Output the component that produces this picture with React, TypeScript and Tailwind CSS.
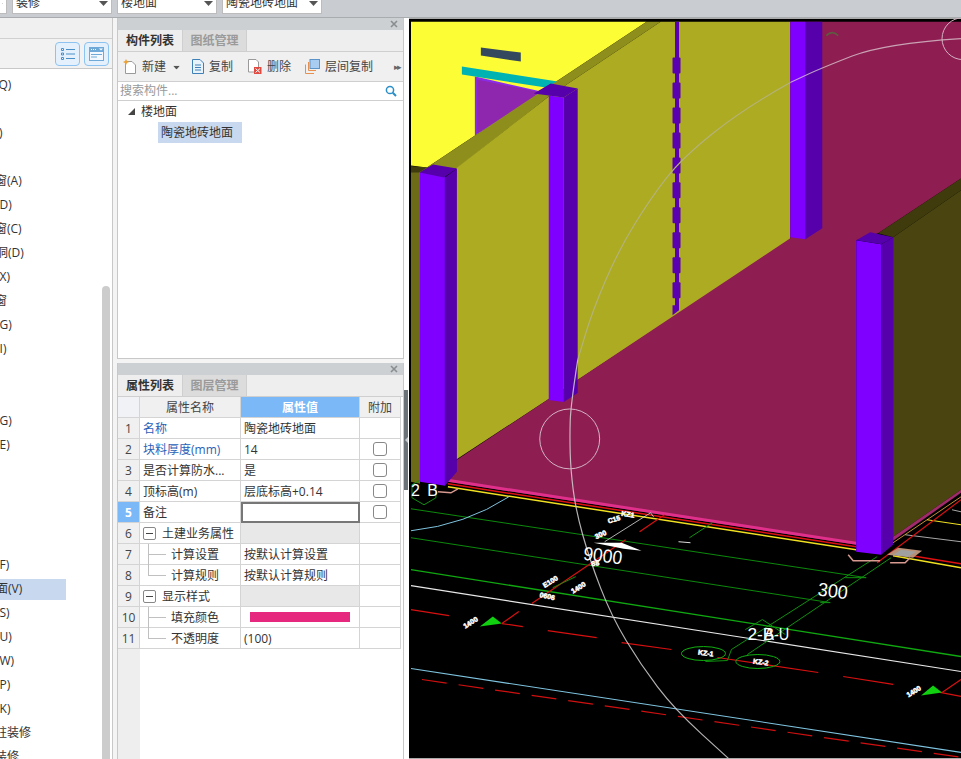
import React from "react";

const listRows: { text: string; cls?: string; active?: boolean }[] = [
  { text: "(Q)", cls: "ml-[-5px]" },
  { text: "" },
  { text: ")", cls: "ml-[-1px]" },
  { text: "" },
  { text: "窗(A)", cls: "ml-[-5px]" },
  { text: "(D)", cls: "ml-[-4px]" },
  { text: "窗(C)", cls: "ml-[-5px]" },
  { text: "洞(D)", cls: "ml-[-4px]" },
  { text: "(X)", cls: "ml-[-4px]" },
  { text: "窗", cls: "ml-[-5px]" },
  { text: "(G)", cls: "ml-[-4px]" },
  { text: "(I)", cls: "ml-[-4px]" },
  { text: "" },
  { text: "" },
  { text: "(G)", cls: "ml-[-4px]" },
  { text: "(E)", cls: "ml-[-4px]" },
  { text: "" },
  { text: "" },
  { text: "" },
  { text: "" },
  { text: "(F)", cls: "ml-[-4px]" },
  { text: "面(V)", cls: "ml-[-4px]", active: true },
  { text: "(S)", cls: "ml-[-4px]" },
  { text: "(U)", cls: "ml-[-4px]" },
  { text: "(W)", cls: "ml-[-4px]" },
  { text: "(P)", cls: "ml-[-4px]" },
  { text: "(K)", cls: "ml-[-4px]" },
  { text: "柱装修", cls: "ml-[-5px]" },
  { text: "装修", cls: "ml-[-5px]" },
];

const props = [
  { name: "名称", value: "陶瓷地砖地面", blue: true },
  { name: "块料厚度(mm)", value: "14", blue: true, check: true },
  { name: "是否计算防水...", value: "是", check: true },
  { name: "顶标高(m)", value: "层底标高+0.14", check: true },
  { name: "备注", value: "", check: true, selected: true },
  { name: "土建业务属性", group: true },
  { name: "计算设置", value: "按默认计算设置", child: "mid" },
  { name: "计算规则", value: "按默认计算规则", child: "last" },
  { name: "显示样式", group: true },
  { name: "填充颜色", swatch: true, child: "mid" },
  { name: "不透明度", value: "(100)", child: "last" },
];

const arcFloorTop: [number, number][] = [[961, 38], [884, 43], [820, 68], [790, 82]];
const arcWall: [number, number][] = [[790, 82], [745, 107], [682, 157], [650, 198], [618, 250], [592, 310], [577, 360]];
const arcFloorLow: [number, number][] = [[577, 360], [570, 405], [569, 437], [570, 470], [575, 510], [589, 560], [611, 617], [640, 665], [674, 710], [728, 759]];

// midpoint smoothing so the big grid arc doesn't look faceted
const smooth = (pts: [number, number][]) => {
  let d = `M${pts[0][0]} ${pts[0][1]}`;
  for (let i = 1; i < pts.length - 1; i++) {
    const mx = (pts[i][0] + pts[i + 1][0]) / 2;
    const my = (pts[i][1] + pts[i + 1][1]) / 2;
    d += ` Q${pts[i][0]} ${pts[i][1]} ${mx} ${my}`;
  }
  const last = pts[pts.length - 1];
  return d + ` L${last[0]} ${last[1]}`;
};

const redDashes = [
  [410, 610, 448, 616], [501, 624, 522, 627], [547, 631, 596, 638], [621, 643, 671, 650],
  [717, 658, 818, 673], [843, 677, 893, 685], [940, 693, 961, 697],
  [501, 624, 518, 612], [531, 604, 625, 540], [639, 532, 664, 515], [877, 563, 961, 500],
  [942, 693, 961, 680],
];

const cadLabels = [
  { x: 627, y: 517, r: 8, t: "KZ1" },
  { x: 614, y: 522, r: -15, t: "C15" },
  { x: 601, y: 537, r: -25, t: "300" },
  { x: 595, y: 566, r: -10, t: "88" },
  { x: 551, y: 584, r: -32, t: "E100" },
  { x: 579, y: 590, r: -32, t: "1400" },
  { x: 546, y: 599, r: 12, t: "0606" },
  { x: 471, y: 625, r: -32, t: "1400" },
  { x: 705, y: 656, r: 8, t: "KZ-1" },
  { x: 760, y: 665, r: 8, t: "KZ-2" },
  { x: 915, y: 694, r: -32, t: "1400" },
];

const Close = () => (
  <svg width="8" height="8" viewBox="0 0 8 8" className="mr-[5px]">
    <path d="M1 1L7 7M7 1L1 7" stroke="#8a8d90" strokeWidth="1.6" />
  </svg>
);

const Caret = () => (
  <svg width="9" height="5" viewBox="0 0 9 5">
    <path d="M0 0H9L4.5 5Z" fill="#555" />
  </svg>
);

const Select = ({ label, cls }: { label: string; cls: string }) => (
  <div className={`h-[22px] mt-[-8px] bg-white border border-[#bcbcbc] flex items-center justify-between pl-[3px] pr-[3px] text-[12px] text-[#333] ${cls}`}>
    <span>{label}</span>
    <Caret />
  </div>
);

const Tabs = ({ active, other }: { active: string; other: string }) => (
  <div className="h-[22px] flex bg-[#eeeeee] border-b border-[#cfcfcf] text-[12px]">
    <div className="w-[65px] flex items-center justify-center font-semibold text-[#333] border-r border-[#cfcfcf]">{active}</div>
    <div className="w-[64px] flex items-center justify-center font-semibold text-[#9a9a9a] bg-[#dcdcdc] border-r border-[#cfcfcf]">{other}</div>
  </div>
);

const ToolButton = ({ icon, label, cls }: { icon: React.ReactNode; label: string; cls: string }) => (
  <div className={`flex items-center gap-[5px] text-[12px] text-[#444] ${cls}`}>
    {icon}
    <span>{label}</span>
  </div>
);

const Canvas = () => (
  <svg viewBox="408 18 553 741" className="block w-full h-full" fontFamily="'Liberation Sans', sans-serif">
    <rect x="408" y="18" width="553" height="741" fill="#000" />
    {/* ceiling + back wall */}
    <path d="M410 21H646L426 167L410 165Z" fill="#fdfd35" />
    <path d="M474 76L479 77L545 92L474 135Z" fill="#8a2be8" />
    <path d="M476 79L541 92L476 133Z" fill="#8e27ae" />
    <path d="M461 66L557 81L545 87L461 74Z" fill="#00b3b3" />
    <path d="M480 47L520 52V61L480 55Z" fill="#35495e" />
    <path d="M646 21H660L548 96L456 168L440 170L426 167Z" fill="#8e8e1c" />
    <path d="M660 21H790V240L455 460V168L548 96Z" fill="#adab22" />
    <path d="M410 166L426 167L440 170L419 176V484L410 482Z" fill="#6e6b17" />
    <path d="M410 166L426 167L418 172L410 172Z" fill="#3f3d0f" />
    {/* thin column behind the floor line */}
    <path d="M674.5 21H678.5V310L672 315V305H674.5Z" fill="#5a00b0" />
    {[57, 82, 107, 132, 157, 182, 207, 232, 257, 282].map((y) => (
      <rect key={y} x="672" y={y} width="8" height="16" rx="1" fill="#5a00b0" />
    ))}
    {/* floor */}
    <path d="M822 21H961V178L878 233L856 240V545L447 482L456 460L790 238V21Z" fill="#8e1d52" />
    <path d="M447 479L856 542V545L447 482Z" fill="#e0308c" />
    {/* right wall */}
    <path d="M893 237L961 190V490L893 537Z" fill="#4a4510" />
    <path d="M878 233L961 178V190L893 237Z" fill="#3f3b0c" />
    <path d="M893 537L961 490V493L893 541Z" fill="#a02a6a" />
    <path d="M893 543L961 497" stroke="#c89030" strokeWidth="1" />
    {/* plan lines below the model */}
    <path d="M447 484L856 547M893 553L961 564" stroke="#e01010" strokeWidth="1.5" />
    <path d="M447 487L856 550M893 556L961 568" stroke="#f0e020" strokeWidth="1.5" />
    <path d="M927 520L961 525" stroke="#f0e020" strokeWidth="1.2" />
    <path d="M905 535L961 542M952 510L961 512" stroke="#a8a8a8" strokeWidth="1" />
    <path d="M410 509L866 578M410 538L830 603" stroke="#0c8a0c" strokeWidth="1" />
    <path d="M410 570L961 657" stroke="#10a810" strokeWidth="1.3" />
    <path d="M410 586L961 672" stroke="#e8e8e8" strokeWidth="1.2" />
    <path d="M410 669L961 753" stroke="#7fc4e0" strokeWidth="1.1" />
    <path d="M410 531Q465 525 508 497" stroke="#7fc4e0" strokeWidth="1" fill="none" />
    <path d="M421 680L961 758" stroke="#d01010" strokeWidth="1.2" strokeDasharray="25 12" />
    {redDashes.map(([a, b, c, d]) => (
      <line key={`${a}-${b}-${c}`} x1={a} y1={b} x2={c} y2={d} stroke="#d81010" strokeWidth="1.2" />
    ))}
    <path d="M731 650L877 557M747 655L891 558M705 662L727 661L731 650M689 538L712 523M552 588L575 577" stroke="#0f900f" strokeWidth="1" fill="none" />
    <path d="M845 578L866 578M820 603L830 603M745 630L762 620L785 635" stroke="#0f900f" strokeWidth="1" fill="none" />
    <path d="M678 542L690 543" stroke="#ddd" strokeWidth="1" />
    <path d="M604 542L650 513L653 517" stroke="#ddd" strokeWidth="0.8" fill="none" />
    <path d="M593 543H621L641 551L623 549Z" fill="#fff" />
    <path d="M479 627L492 617L501 624Z" fill="#10d010" />
    <path d="M921 696L933 686L942 693Z" fill="#10d010" />
    <ellipse cx="703" cy="654" rx="22" ry="7" fill="none" stroke="#10b010" strokeWidth="1" />
    <ellipse cx="757.5" cy="662" rx="22" ry="7" fill="none" stroke="#10b010" strokeWidth="1" />
    {/* footing outlines */}
    <path d="M848 555L853 561H880M890 563H905L910 558" stroke="#d89a90" strokeWidth="1.5" fill="none" />
    <path d="M887 555L898 548L922 551L913 558Z" fill="#b89078" />
    <path d="M893 555L901 550L916 552L908 557Z" fill="#a0a0a0" />
    <path d="M437 492L450 493L457 489" stroke="#d89a90" strokeWidth="1.5" fill="none" />
    <path d="M423 478L435 485V498L423 505L411 498V485Z" fill="none" stroke="#0f900f" strokeWidth="1" />
    {/* pillars */}
    <path d="M419 172H444V486L419 482Z" fill="#7f00ff" />
    <path d="M444 177L456 168V472L444 486Z" fill="#5500aa" />
    <path d="M418.5 172L432 164L456 168L443 177Z" fill="#5500aa" />
    <path d="M548 95L563 97V402L548 400Z" fill="#7f00ff" />
    <path d="M563 97L577 88V393L563 402Z" fill="#5500aa" />
    <path d="M533 93L550 83L577 88L563 97L548 95Z" fill="#5500aa" />
    <path d="M790 21H805V239L790 237Z" fill="#7f00ff" />
    <path d="M805 21H822V228L805 239Z" fill="#5500aa" />
    <path d="M856 240L881 244V555L856 552Z" fill="#7f00ff" />
    <path d="M881 244L893 237V545L881 555Z" fill="#5500aa" />
    <path d="M856 240L870 232L893 237L881 244Z" fill="#5500aa" />
    {/* grid bubbles + arc: it reads muted over the olive wall */}
    <path d={smooth(arcFloorTop)} fill="none" stroke="#d8c4cc" strokeOpacity="0.8" strokeWidth="1.1" />
    <path d={smooth(arcWall)} fill="none" stroke="#b4b27a" strokeWidth="1.2" />
    <path d={smooth(arcFloorLow)} fill="none" stroke="#d4d0d2" strokeOpacity="0.85" strokeWidth="1.2" />
    <circle cx="569" cy="439" r="30" fill="none" stroke="#d4b4c4" strokeWidth="1" />
    <circle cx="963" cy="38" r="21" fill="none" stroke="#d4b4c4" strokeWidth="1" />
    <path d="M826 35Q832 29 838 35" stroke="#5c5c40" strokeWidth="1.5" fill="none" />
    {cadLabels.map((l) => (
      <text key={`${l.x}-${l.y}`} x={l.x} y={l.y} transform={`rotate(${l.r} ${l.x} ${l.y})`} fontSize="7" fontWeight="700" fill="#fff" stroke="#fff" strokeWidth="0.5" textAnchor="middle">{l.t}</text>
    ))}
    <text x="410" y="496" fontSize="16" fill="#fff" textLength="27">2 B</text>
    <text x="582" y="560" transform="rotate(7 582 560)" fontSize="19" fill="#fff" textLength="39" lengthAdjust="spacingAndGlyphs">9000</text>
    <text x="817" y="596" transform="rotate(7 817 596)" fontSize="19" fill="#fff" textLength="30" lengthAdjust="spacingAndGlyphs">300</text>
    <text x="747" y="640" fontSize="17" fill="#fff" textLength="27" lengthAdjust="spacingAndGlyphs">2-B</text>
    <text x="764" y="640" fontSize="17" fill="#fff" textLength="25" lengthAdjust="spacingAndGlyphs">A-U</text>
  </svg>
);

export default function App() {
  return (
    <div className="w-[961px] h-[759px] overflow-hidden flex flex-col bg-white font-['Open_Sans','Noto_Sans_CJK_SC',sans-serif]">
      {/* ribbon selectors, cut off by the crop */}
      <div className="h-[18px] shrink-0 bg-[#c9cdd1] border-b border-[#a9acaf] flex">
        <Select label="" cls="w-[8px] ml-[-1px] border-l-0" />
        <Select label="装修" cls="w-[100px] ml-[5px]" />
        <Select label="楼地面" cls="w-[100px] ml-[5px]" />
        <Select label="陶瓷地砖地面" cls="w-[100px] ml-[5px]" />
      </div>

      <div className="flex-1 flex min-h-0">
        {/* left navigation tree */}
        <div className="w-[113px] shrink-0 border-r border-[#c8c8c8] flex flex-col">
          <div className="h-[21px] bg-[#f0f0f0] border-b border-[#d0d0d0]" />
          <div className="h-[30px] bg-[#f2f2f2] border-b border-[#c8c8c8] flex items-center justify-end pr-[3px] gap-[4px]">
            <div className="w-[25px] h-[24px] rounded-[4px] border border-[#8cc3f0] bg-[#e4f1fc] flex items-center justify-center">
              <svg width="14" height="14" viewBox="0 0 14 14">
                <path d="M0.5 1.5h2v2h-2zM0.5 6h2v2h-2zM0.5 10.5h2v2h-2z" fill="none" stroke="#4a90c8" />
                <path d="M5 2.5h9M5 7h9M5 11.5h9" stroke="#4a90c8" />
              </svg>
            </div>
            <div className="w-[25px] h-[24px] rounded-[4px] border border-[#8cc3f0] bg-[#e4f1fc] flex items-center justify-center">
              <svg width="15" height="14" viewBox="0 0 15 14">
                <rect width="15" height="14" fill="#6fa9d8" />
                <rect x="1" y="5" width="13" height="8" fill="#f2f8fd" />
                <path d="M2 2.5h1M4 2.5h1M6 2.5h1" stroke="#fff" />
                <path d="M10 1.5h4L12 3.5Z" fill="#fff" />
                <path d="M2 7.5h11M2 10h6" stroke="#6fa9d8" />
              </svg>
            </div>
          </div>
          <div className="flex-1 relative bg-white overflow-hidden pt-[4px]">
            {listRows.map((row, i) => (
              <div key={i} className="h-[24px] flex items-center text-[12px] text-[#333]">
                <div className={`h-[21px] flex items-center ${row.active ? "w-[66px] bg-[#c8d8ee]" : ""}`}>
                  <span className={row.cls}>{row.text}</span>
                </div>
              </div>
            ))}
            <div className="absolute left-[102px] top-[217px] bottom-0 w-[8px] rounded-t-[4px] bg-[#cccccc]" />
          </div>
        </div>

        <div className="w-[4px] shrink-0 bg-[#f4f4f4]" />

        {/* middle panels */}
        <div className="w-[287px] shrink-0 flex flex-col">
          <div className="h-[341px] border border-t-0 border-[#c8c8c8] flex flex-col">
            <div className="h-[12px] bg-[#ccd0d3] flex items-center justify-end"><Close /></div>
            <Tabs active="构件列表" other="图纸管理" />
            <div className="h-[29px] bg-[#f0f0f0] flex items-center relative">
              <ToolButton
                cls="ml-[5px]"
                label="新建"
                icon={
                  <svg width="14" height="15" viewBox="0 0 14 15">
                    <path d="M2.5 2.5H9L12.5 6V14.5H2.5Z" fill="#fff" stroke="#9a9a9a" />
                    <path d="M3 0L4 2L6 3L4 4L3 6L2 4L0 3L2 2Z" fill="#f0a030" />
                  </svg>
                }
              />
              <div className="ml-[6px] mt-[1px] scale-75"><Caret /></div>
              <ToolButton
                cls="ml-[11px]"
                label="复制"
                icon={
                  <svg width="12" height="15" viewBox="0 0 12 15">
                    <path d="M0.5 0.5H8L11.5 4V14.5H0.5Z" fill="#e8f2fb" stroke="#3f80b8" />
                    <path d="M3 6H9M3 8.5H9M3 11H9" stroke="#3f80b8" />
                  </svg>
                }
              />
              <ToolButton
                cls="ml-[15px]"
                label="删除"
                icon={
                  <svg width="14" height="15" viewBox="0 0 14 15">
                    <path d="M0.5 0.5H8L10.5 3V13H0.5Z" fill="#fff" stroke="#9a9a9a" />
                    <rect x="6" y="8" width="7.5" height="7" fill="#e04a40" />
                    <path d="M7.5 9.5L12 13.5M12 9.5L7.5 13.5" stroke="#fff" />
                  </svg>
                }
              />
              <ToolButton
                cls="ml-[14px]"
                label="层间复制"
                icon={
                  <svg width="15" height="15" viewBox="0 0 15 15">
                    <path d="M3.5 3V11.5H11M0.5 5.5V14.5H9" fill="none" stroke="#e89050" />
                    <rect x="5" y="0.5" width="9.5" height="9" fill="#a8cdf0" stroke="#5a94c8" />
                  </svg>
                }
              />
              <span className="absolute right-[3px] text-[9px] text-[#666] tracking-[-2px]">▸▸</span>
            </div>
            <div className="h-[20px] bg-white border-y border-[#cfcfcf] flex items-center justify-between pl-[2px] pr-[6px] text-[12px] text-[#999]">
              <span>搜索构件...</span>
              <svg width="12" height="12" viewBox="0 0 12 12">
                <circle cx="5" cy="5" r="3.6" fill="none" stroke="#2b8fc8" strokeWidth="1.5" />
                <path d="M7.8 7.8L11 11" stroke="#2b8fc8" strokeWidth="2" />
              </svg>
            </div>
            <div className="flex-1 bg-white text-[12px] text-[#333] pl-[10px]">
              <div className="h-[21px] flex items-center gap-[6px]">
                <svg width="7" height="7" viewBox="0 0 7 7"><path d="M7 0V7H0Z" fill="#444" /></svg>
                <span>楼地面</span>
              </div>
              <div className="ml-[30px] w-[84px] h-[21px] flex items-center bg-[#c8d8ee] pl-[3px]">陶瓷地砖地面</div>
            </div>
          </div>

          <div className="h-[4px] shrink-0 bg-[#f4f4f4]" />

          <div className="flex-1 border-x border-[#c8c8c8] flex flex-col min-h-0">
            <div className="h-[12px] bg-[#ccd0d3] flex items-center justify-end"><Close /></div>
            <Tabs active="属性列表" other="图层管理" />
            <div className="flex-1 flex flex-col bg-white text-[12px] text-[#333] min-h-0">
              <div className="grid grid-cols-[22px_101px_119px_41px] auto-rows-[21px] w-[283px]">
                <div className="bg-[#f0f2f5] border-r border-b border-[#d4d4d4]" />
                <div className="bg-[#f0f0f0] border-r border-b border-[#d4d4d4] flex items-center justify-center text-[#444] pt-[2px]">属性名称</div>
                <div className="bg-[#7ab8f8] border-r border-b border-[#d4d4d4] flex items-center justify-center text-white font-semibold pt-[2px]">属性值</div>
                <div className="bg-[#f0f0f0] border-r border-b border-[#d4d4d4] flex items-center justify-center text-[#444] pt-[2px]">附加</div>
                {props.map((p, i) => (
                  <React.Fragment key={p.name}>
                    <div className={`border-r border-b border-[#d4d4d4] flex items-center justify-center pt-[2px] ${p.selected ? "bg-[#7ab8f8] text-white font-bold" : "bg-[#f0f0f0] text-[#444]"}`}>{i + 1}</div>
                    <div className={`relative border-r border-b border-[#d4d4d4] flex items-center whitespace-nowrap pt-[2px] ${p.group ? "pl-[3px] gap-[6px]" : p.child ? "pl-[31px]" : "pl-[3px]"} ${p.blue ? "text-[#2a5fb8]" : ""}`}>
                      {p.group && (
                        <span className="w-[13px] h-[13px] mt-[-2px] rounded-[2px] border border-[#888] flex items-center justify-center">
                          <span className="w-[7px] h-px bg-[#444]" />
                        </span>
                      )}
                      {p.child && (
                        <>
                          <span className={`absolute left-[8px] top-0 w-px bg-[#c0c0c0] ${p.child === "mid" ? "h-[21px]" : "h-[11px]"}`} />
                          <span className="absolute left-[8px] top-[10px] w-[18px] h-px bg-[#c0c0c0]" />
                        </>
                      )}
                      {p.name}
                    </div>
                    {p.selected ? (
                      <div className="border-2 border-[#777]" />
                    ) : (
                      <div className={`border-r border-b border-[#d4d4d4] flex items-center whitespace-nowrap pl-[3px] pt-[2px] ${p.group ? "bg-[#e8e8e8]" : ""}`}>
                        {p.swatch ? <div className="ml-[6px] mt-[-2px] w-[100px] h-[10px] bg-[#e6287f]" /> : p.value}
                      </div>
                    )}
                    <div className="border-r border-b border-[#d4d4d4] flex items-center justify-center">
                      {p.check && <span className="w-[14px] h-[14px] rounded-[3px] border border-[#888] bg-white" />}
                    </div>
                  </React.Fragment>
                ))}
              </div>
              <div className="flex-1 w-[22px] bg-[#eeeeee]" />
            </div>
          </div>
        </div>

        {/* splitter */}
        <div className="w-[5px] shrink-0 bg-white pt-[372px]">
          <div className="w-[4px] h-[100px] bg-[#6b7278] flex items-center justify-center">
            <svg width="3" height="6" viewBox="0 0 3 6"><path d="M3 0V6L0 3Z" fill="#c8ccd0" /></svg>
          </div>
        </div>

        <div className="flex-1 min-w-0">
          <Canvas />
        </div>
      </div>
    </div>
  );
}
